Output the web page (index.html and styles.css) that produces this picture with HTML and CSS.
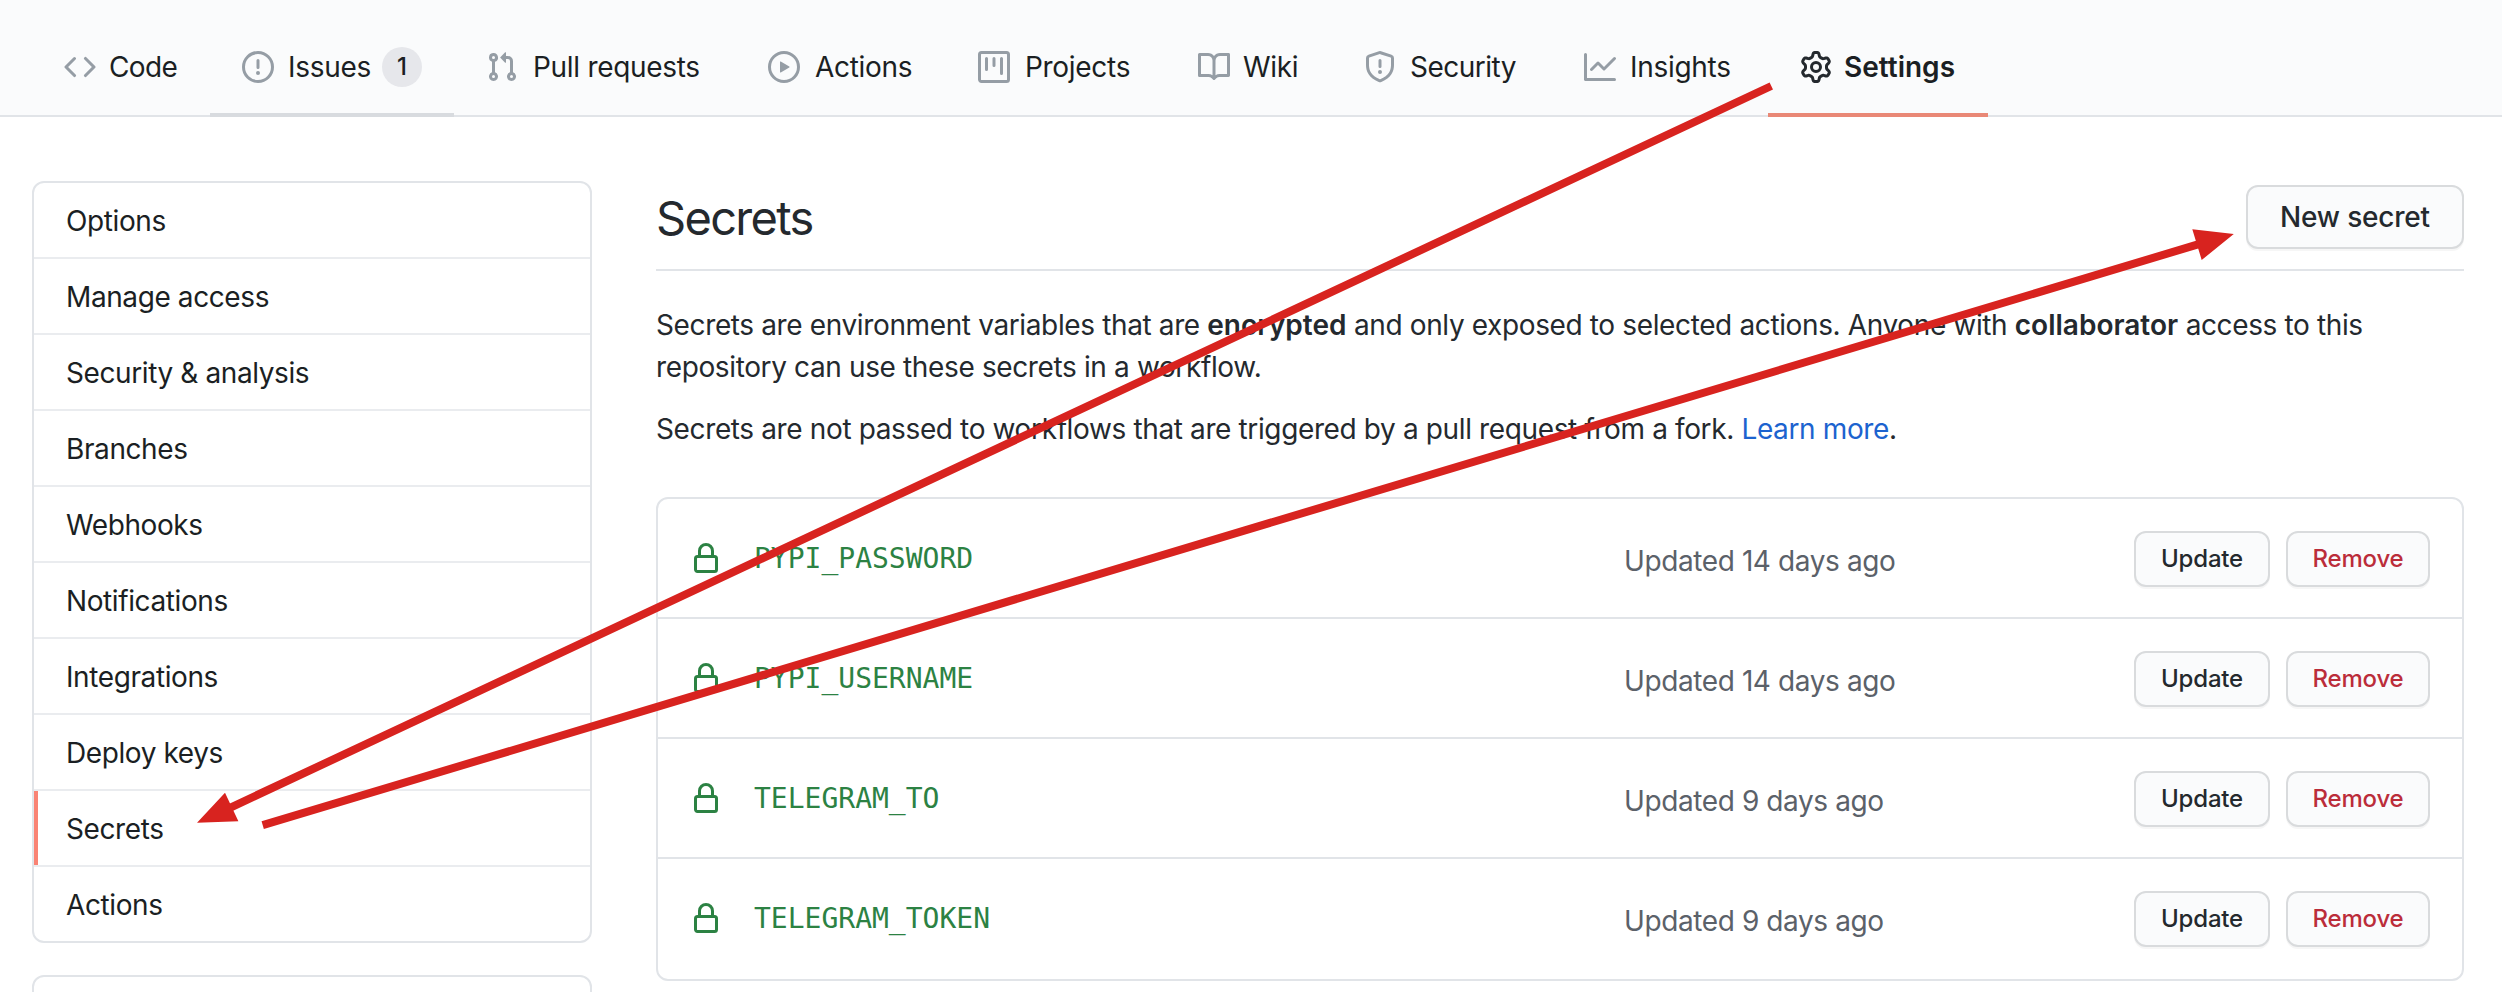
FILE: index.html
```html
<!DOCTYPE html>
<html lang="en">
<head>
<meta charset="utf-8">
<title>Secrets</title>
<link rel="stylesheet" href="styles.css">
</head>
<body>
<nav class="tabs">
  <a class="tab tab-code"><svg class="icon" viewBox="0 0 16 16"><path fill-rule="evenodd" d="M4.72 3.22a.75.75 0 011.06 1.06L2.06 8l3.72 3.72a.75.75 0 11-1.06 1.06L.47 8.53a.75.75 0 010-1.06l4.25-4.25zm6.56 0a.75.75 0 10-1.06 1.06L13.94 8l-3.72 3.72a.75.75 0 101.06 1.06l4.25-4.25a.75.75 0 000-1.06l-4.25-4.25z"/></svg><span>Code</span></a>
  <a class="tab tab-issues"><svg class="icon" viewBox="0 0 16 16"><path fill-rule="evenodd" d="M8 1.5a6.5 6.5 0 100 13 6.5 6.5 0 000-13zM0 8a8 8 0 1116 0A8 8 0 010 8zm9 3a1 1 0 11-2 0 1 1 0 012 0zm-.25-6.25a.75.75 0 00-1.5 0v3.5a.75.75 0 001.5 0v-3.5z"/></svg><span>Issues</span><span class="counter">1</span></a>
  <a class="tab tab-pulls"><svg class="icon" viewBox="0 0 16 16"><path fill-rule="evenodd" d="M7.177 3.073L9.573.677A.25.25 0 0110 .854v4.792a.25.25 0 01-.427.177L7.177 3.427a.25.25 0 010-.354zM3.75 2.5a.75.75 0 100 1.5.75.75 0 000-1.5zm-2.25.75a2.25 2.25 0 113 2.122v5.256a2.251 2.251 0 11-1.5 0V5.372A2.25 2.25 0 011.5 3.25zM11 2.5h-1V4h1a1 1 0 011 1v5.628a2.251 2.251 0 101.5 0V5A2.5 2.5 0 0011 2.5zm1 10.25a.75.75 0 111.5 0 .75.75 0 01-1.5 0zM3.75 12a.75.75 0 100 1.5.75.75 0 000-1.5z"/></svg><span>Pull requests</span></a>
  <a class="tab tab-actions"><svg class="icon" viewBox="0 0 16 16"><path fill-rule="evenodd" d="M1.5 8a6.5 6.5 0 1113 0 6.5 6.5 0 01-13 0zM8 0a8 8 0 100 16A8 8 0 008 0zM6.379 5.227A.25.25 0 006 5.442v5.117a.25.25 0 00.379.214l4.264-2.559a.25.25 0 000-.428L6.379 5.227z"/></svg><span>Actions</span></a>
  <a class="tab tab-projects"><svg class="icon" viewBox="0 0 16 16"><path fill-rule="evenodd" d="M1.75 0A1.75 1.75 0 000 1.75v12.5C0 15.216.784 16 1.75 16h12.5A1.75 1.75 0 0016 14.25V1.75A1.75 1.75 0 0014.25 0H1.75zM1.5 1.75a.25.25 0 01.25-.25h12.5a.25.25 0 01.25.25v12.5a.25.25 0 01-.25.25H1.75a.25.25 0 01-.25-.25V1.75zM11.75 3a.75.75 0 00-.75.75v7.5a.75.75 0 001.5 0v-7.5a.75.75 0 00-.75-.75zm-8.25.75a.75.75 0 011.5 0v5.5a.75.75 0 01-1.5 0v-5.5zM8 3a.75.75 0 00-.75.75v3.5a.75.75 0 001.5 0v-3.5A.75.75 0 008 3z"/></svg><span>Projects</span></a>
  <a class="tab tab-wiki"><svg class="icon" viewBox="0 0 16 16"><path fill-rule="evenodd" d="M0 1.75A.75.75 0 01.75 1h4.253c1.227 0 2.317.59 3 1.501A3.744 3.744 0 0111.006 1h4.245a.75.75 0 01.75.75v10.5a.75.75 0 01-.75.75h-4.507a2.25 2.25 0 00-1.591.659l-.622.621a.75.75 0 01-1.06 0l-.622-.621A2.25 2.25 0 005.258 13H.75a.75.75 0 01-.75-.75V1.75zm8.755 3a2.25 2.25 0 012.25-2.25H14.5v9h-3.757c-.71 0-1.4.201-1.992.572l.004-7.322zm-1.504 7.324l.004-5.073-.002-2.253A2.25 2.25 0 005.003 2.5H1.5v9h3.757a3.75 3.75 0 011.994.574z"/></svg><span>Wiki</span></a>
  <a class="tab tab-security"><svg class="icon" viewBox="0 0 16 16"><path fill-rule="evenodd" d="M7.467.133a1.75 1.75 0 011.066 0l5.25 1.68A1.75 1.75 0 0115 3.48V7c0 1.566-.32 3.182-1.303 4.682-.983 1.498-2.585 2.813-5.032 3.855a1.7 1.7 0 01-1.33 0c-2.447-1.042-4.049-2.357-5.032-3.855C1.32 10.182 1 8.566 1 7V3.48a1.75 1.75 0 011.217-1.667l5.25-1.68zm.61 1.429a.25.25 0 00-.153 0l-5.25 1.68a.25.25 0 00-.174.238V7c0 1.358.275 2.666 1.057 3.86.784 1.194 2.121 2.34 4.366 3.297a.2.2 0 00.154 0c2.245-.956 3.582-2.104 4.366-3.298C13.225 9.666 13.5 8.36 13.5 7V3.48a.25.25 0 00-.174-.237l-5.25-1.68zM9 10.5a1 1 0 11-2 0 1 1 0 012 0zm-.25-5.75a.75.75 0 10-1.5 0v3a.75.75 0 001.5 0v-3z"/></svg><span>Security</span></a>
  <a class="tab tab-insights"><svg class="icon" viewBox="0 0 16 16"><path fill-rule="evenodd" d="M1.5 1.75a.75.75 0 00-1.5 0v12.5c0 .414.336.75.75.75h14.5a.75.75 0 000-1.5H1.5V1.75zm14.28 2.53a.75.75 0 00-1.06-1.06L10 7.94 7.53 5.47a.75.75 0 00-1.06 0L3.22 8.72a.75.75 0 001.06 1.06L7 7.06l2.47 2.47a.75.75 0 001.06 0l5.25-5.25z"/></svg><span>Insights</span></a>
  <a class="tab tab-settings"><svg class="icon" viewBox="0 0 16 16"><path fill-rule="evenodd" d="M7.429 1.525a6.593 6.593 0 011.142 0c.036.003.108.036.137.146l.289 1.105c.147.56.55.967.997 1.189.174.086.341.183.501.29.417.278.97.423 1.53.27l1.102-.303c.11-.03.175.016.195.046.219.31.41.641.573.989.014.031.022.11-.059.19l-.815.806c-.411.406-.562.957-.53 1.456a4.588 4.588 0 010 .582c-.032.499.119 1.05.53 1.456l.815.806c.08.08.073.159.059.19a6.494 6.494 0 01-.573.99c-.02.029-.086.074-.195.045l-1.103-.303c-.559-.153-1.112-.008-1.529.27-.16.107-.327.204-.5.29-.449.222-.851.628-.998 1.189l-.289 1.105c-.029.11-.101.143-.137.146a6.613 6.613 0 01-1.142 0c-.036-.003-.108-.037-.137-.146l-.289-1.105c-.147-.56-.55-.967-.997-1.189a4.502 4.502 0 01-.501-.29c-.417-.278-.97-.423-1.53-.27l-1.102.303c-.11.03-.175-.016-.195-.046a6.492 6.492 0 01-.573-.989c-.014-.031-.022-.11.059-.19l.815-.806c.411-.406.562-.957.53-1.456a4.587 4.587 0 010-.582c.032-.499-.119-1.05-.53-1.456l-.815-.806c-.08-.08-.073-.159-.059-.19a6.44 6.44 0 01.573-.99c.02-.029.086-.075.195-.045l1.103.303c.559.153 1.112.008 1.529-.27.16-.107.327-.204.5-.29.449-.222.851-.628.998-1.189l.289-1.105c.029-.11.101-.143.137-.146zM8 0c-.236 0-.47.01-.701.03-.743.065-1.29.615-1.458 1.261l-.29 1.106c-.017.066-.078.158-.211.224a5.994 5.994 0 00-.668.386c-.123.082-.233.09-.3.071L3.27 2.776c-.644-.177-1.392.02-1.82.63a7.977 7.977 0 00-.704 1.217c-.315.675-.111 1.422.363 1.891l.815.806c.05.048.098.147.088.294a6.084 6.084 0 000 .772c.01.147-.038.246-.088.294l-.815.806c-.474.469-.678 1.216-.363 1.891.2.428.436.835.704 1.218.428.609 1.176.806 1.82.63l1.103-.303c.066-.019.176-.011.299.071.213.143.436.272.668.386.133.066.194.158.212.224l.289 1.106c.169.646.715 1.196 1.458 1.26a8.094 8.094 0 001.402 0c.743-.064 1.29-.614 1.458-1.26l.29-1.106c.017-.066.078-.158.211-.224a5.98 5.98 0 00.668-.386c.123-.082.233-.09.3-.071l1.102.302c.644.177 1.392-.02 1.82-.63.268-.382.505-.789.704-1.217.315-.675.111-1.422-.364-1.891l-.814-.806c-.05-.048-.098-.147-.088-.294a6.1 6.1 0 000-.772c-.01-.147.039-.246.088-.294l.814-.806c.475-.469.679-1.216.364-1.891a7.992 7.992 0 00-.704-1.218c-.428-.609-1.176-.806-1.82-.63l-1.103.303c-.066.019-.176.011-.299-.071a5.991 5.991 0 00-.668-.386c-.133-.066-.194-.158-.212-.224L10.16 1.29C9.99.645 9.444.095 8.701.031A8.094 8.094 0 008 0zm1.5 8a1.5 1.5 0 11-3 0 1.5 1.5 0 013 0zM11 8a3 3 0 11-6 0 3 3 0 016 0z"/></svg><span>Settings</span></a>
</nav>

<div class="page">
  <aside class="sidebar">
    <ul class="menu">
      <li><span>Options</span></li>
      <li><span>Manage access</span></li>
      <li><span>Security &amp; analysis</span></li>
      <li><span>Branches</span></li>
      <li><span>Webhooks</span></li>
      <li><span>Notifications</span></li>
      <li><span>Integrations</span></li>
      <li><span>Deploy keys</span></li>
      <li class="current"><span>Secrets</span></li>
      <li><span>Actions</span></li>
    </ul>
    <div class="menu menu-next"></div>
  </aside>

  <main class="content">
    <header class="head">
      <h1>Secrets</h1>
      <button class="btn btn-new">New secret</button>
    </header>
    <p class="line-a">Secrets are environment variables that are <b>encrypted</b> and only exposed to selected actions. Anyone with <b>collaborator</b> access to this<br>repository can use these secrets in a workflow.</p>
    <p class="line-b">Secrets are not passed to workflows that are triggered by a pull request from a fork. <a>Learn more</a>.</p>

    <div class="list">
      <div class="row">
        <svg class="lock" viewBox="0 0 16 16"><path id="lock" fill-rule="evenodd" d="M4 4v2h-.25A1.75 1.75 0 002 7.75v5.5c0 .966.784 1.75 1.75 1.75h8.5A1.75 1.75 0 0014 13.25v-5.5A1.75 1.75 0 0012.25 6H12V4a4 4 0 10-8 0zm6.5 2V4a2.5 2.5 0 00-5 0v2h5zM12 7.5h.25a.25.25 0 01.25.25v5.5a.25.25 0 01-.25.25h-8.5a.25.25 0 01-.25-.25v-5.5a.25.25 0 01.25-.25H12z"/></svg>
        <code>PYPI_PASSWORD</code><span class="when">Updated 14 days ago</span>
        <button class="btn btn-sm btn-update">Update</button><button class="btn btn-sm btn-remove">Remove</button>
      </div>
      <div class="row">
        <svg class="lock" viewBox="0 0 16 16"><use href="#lock"/></svg>
        <code>PYPI_USERNAME</code><span class="when">Updated 14 days ago</span>
        <button class="btn btn-sm btn-update">Update</button><button class="btn btn-sm btn-remove">Remove</button>
      </div>
      <div class="row">
        <svg class="lock" viewBox="0 0 16 16"><use href="#lock"/></svg>
        <code>TELEGRAM_TO</code><span class="when">Updated 9 days ago</span>
        <button class="btn btn-sm btn-update">Update</button><button class="btn btn-sm btn-remove">Remove</button>
      </div>
      <div class="row">
        <svg class="lock" viewBox="0 0 16 16"><use href="#lock"/></svg>
        <code>TELEGRAM_TOKEN</code><span class="when">Updated 9 days ago</span>
        <button class="btn btn-sm btn-update">Update</button><button class="btn btn-sm btn-remove">Remove</button>
      </div>
    </div>
  </main>
</div>

<svg class="arrows" viewBox="0 0 2502 992">
  <path class="shaft" d="M1771.3 86L231 807.3M262.7 825.2L2198 244.4"/>
  <path class="tip" d="M197 822.8L225 792.7L238.4 821.3ZM2233.8 234L2192.3 229.3L2201.7 260Z"/>
</svg>
</body>
</html>
```
FILE: styles.css
```css
* { box-sizing: border-box; }

body {
  margin: 0;
  width: 2502px;
  height: 992px;
  overflow: hidden;
  background: #fff;
  color: #24292e;
  font-family: Inter, "Liberation Sans", sans-serif;
  font-size: 28px;
  line-height: 42px;
  letter-spacing: -0.4px;
}

/* repository tabs */
.tabs {
  display: flex;
  height: 117px;
  padding-left: 32px;
  background: #fafbfc;
  border-bottom: 2px solid #e1e4e8;
  color: #1b1f23;
  letter-spacing: -0.3px;
}
.tab {
  display: flex;
  align-items: center;
  height: 117px;
  padding: 21px 0 0 32px;
  border-bottom: 4px solid transparent;
  white-space: nowrap;
}
.icon {
  flex: none;
  width: 32px;
  height: 32px;
  margin-right: 14px;
  fill: #959da5;
}
.tab-code { width: 178px; letter-spacing: -0.6px; }
.tab-code .icon { margin-right: 13px; }
.tab-issues { width: 244px; border-bottom-color: #d8dbdf; }
.tab-pulls { width: 282px; }
.tab-pulls .icon, .tab-actions .icon, .tab-projects .icon { margin-right: 15px; }
.tab-actions { width: 210px; }
.tab-projects { width: 220px; }
.tab-wiki { width: 166px; }
.tab-wiki .icon { margin-right: 13px; }
.tab-security { width: 220px; letter-spacing: -0.5px; }
.tab-insights { width: 216px; }
.tab-settings {
  width: 220px;
  border-bottom-color: #e98876;
  font-weight: 600;
  letter-spacing: 0;
}
.tab-settings .icon { margin-right: 12px; fill: #24292e; }
.counter {
  width: 40px;
  height: 40px;
  margin-left: 11px;
  border-radius: 20px;
  background: #e6e7eb;
  font-size: 24px;
  font-weight: 500;
  line-height: 40px;
  text-align: center;
}

.page {
  display: flex;
  gap: 64px;
  padding-left: 32px;
}

/* settings menu */
.sidebar { width: 560px; padding-top: 64px; color: #1b1f23; }
.menu {
  margin: 0 0 32px;
  padding: 0;
  border: 2px solid #e1e4e8;
  border-radius: 12px;
  list-style: none;
}
.menu li {
  display: flex;
  align-items: center;
  height: 76px;
  padding: 2px 0 0 32px;
  border-bottom: 2px solid #eaecef;
}
.menu li:last-child { height: 74px; border-bottom: 0; }
.menu .current { box-shadow: inset 4px 0 #f98374; }
.menu-next { height: 60px; margin-bottom: 0; }

/* secrets */
.content { width: 1808px; padding-top: 64px; }
.head {
  display: flex;
  align-items: center;
  justify-content: space-between;
  height: 90px;
  margin-bottom: 33px;
  border-bottom: 2px solid #e1e4e8;
}
.head h1 {
  margin: 0 0 14px;
  font-size: 47px;
  font-weight: 400;
  line-height: 72px;
  letter-spacing: -1.7px;
}
.btn {
  padding: 0;
  border: 2px solid #d9dbdd;
  border-radius: 12px;
  background: #fafbfc;
  box-shadow: 0 2px 0 rgba(27, 31, 35, 0.04);
  color: #24292e;
  font: 500 28px/42px Inter, "Liberation Sans", sans-serif;
  letter-spacing: -0.2px;
}
.btn-new { width: 218px; height: 64px; margin-bottom: 16px; }
.content p { margin: 0; white-space: nowrap; letter-spacing: -0.37px; }
.content b { font-weight: 600; letter-spacing: 0; }
.content .line-b { margin-top: 20px; }
.line-b a { color: #1c63cf; }

.list {
  margin-top: 47px;
  border: 2px solid #e1e4e8;
  border-radius: 12px;
}
.row {
  display: flex;
  align-items: center;
  height: 120px;
  padding: 2px 32px 0;
  border-bottom: 2px solid #e1e4e8;
}
.row:last-child { border-bottom: 0; padding-bottom: 2px; }
.lock { width: 32px; height: 32px; margin-right: 32px; fill: #2c8243; }
.row code {
  width: 870px;
  color: #2c8243;
  font: 28px/42px "DejaVu Sans Mono", monospace;
  letter-spacing: 0;
}
.when { width: 510px; padding-top: 3px; color: #5b6169; white-space: nowrap; }
.btn-sm { height: 56px; font-size: 24px; line-height: 40px; }
.btn-update { width: 136px; margin-right: 16px; }
.btn-remove { width: 144px; color: #bb2d3a; }

/* walkthrough arrows drawn across the page */
.arrows { position: absolute; top: 0; left: 0; width: 2502px; height: 992px; }
.shaft { fill: none; stroke: #d8231f; stroke-width: 8; }
.tip { fill: #d8231f; }
```
